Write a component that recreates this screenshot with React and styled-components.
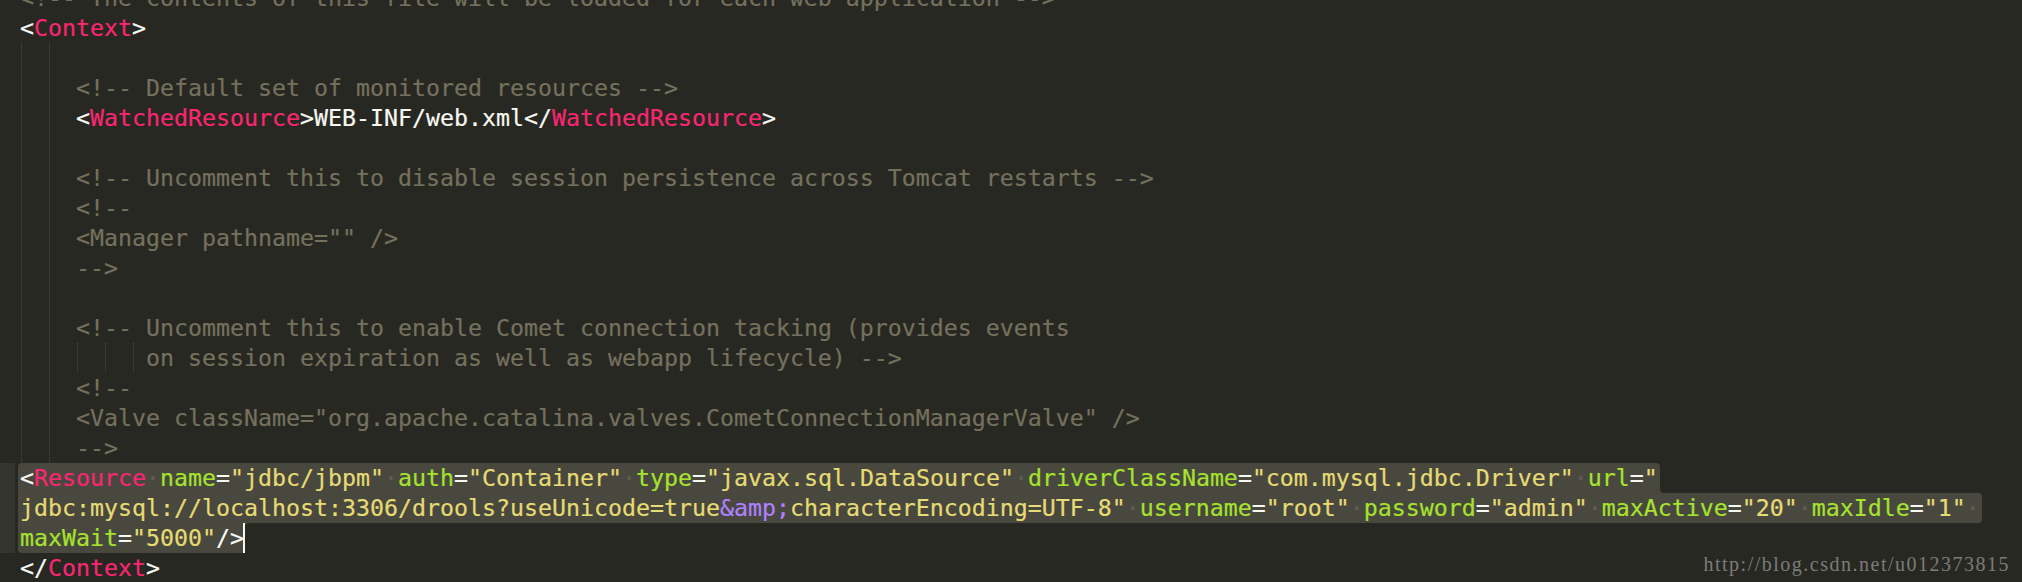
import React from "react";
import styled, { createGlobalStyle, css } from "styled-components";

const GlobalStyle = createGlobalStyle`
  html, body {
    margin: 0;
    padding: 0;
    background: #272822;
  }
  body {
    overflow: hidden;
  }
`;

const COLORS = {
  p: "#f8f8f2",
  t: "#f92672",
  a: "#a6e22e",
  s: "#e6db74",
  c: "#75715e",
  x: "#f8f8f2",
  e: "#ae81ff",
  w: "#5f5e54",
};

const SEL = "#49483e";
const R = 4;

// each line: guides (indent columns), tokens, selection shape
const LINES = [
  { tokens: [["c", "<!-- The contents of this file will be loaded for each web application -->"]] },
  { tokens: [["p", "<"], ["t", "Context"], ["p", ">"]] },
  { guides: [0, 2], tokens: [] },
  { guides: [0, 2], tokens: [["x", "    "], ["c", "<!-- Default set of monitored resources -->"]] },
  {
    guides: [0, 2],
    tokens: [
      ["x", "    "], ["p", "<"], ["t", "WatchedResource"], ["p", ">"], ["x", "WEB-INF/web.xml"],
      ["p", "</"], ["t", "WatchedResource"], ["p", ">"],
    ],
  },
  { guides: [0, 2], tokens: [] },
  {
    guides: [0, 2],
    tokens: [["x", "    "], ["c", "<!-- Uncomment this to disable session persistence across Tomcat restarts -->"]],
  },
  { guides: [0, 2], tokens: [["x", "    "], ["c", "<!--"]] },
  { guides: [0, 2], tokens: [["x", "    "], ["c", '<Manager pathname="" />']] },
  { guides: [0, 2], tokens: [["x", "    "], ["c", "-->"]] },
  { guides: [0, 2], tokens: [] },
  {
    guides: [0, 2],
    tokens: [["x", "    "], ["c", "<!-- Uncomment this to enable Comet connection tacking (provides events"]],
  },
  {
    guides: [0, 2, 4, 6, 8],
    tokens: [["x", "         "], ["c", "on session expiration as well as webapp lifecycle) -->"]],
  },
  { guides: [0, 2], tokens: [["x", "    "], ["c", "<!--"]] },
  {
    guides: [0, 2],
    tokens: [
      ["x", "    "],
      ["c", '<Valve className="org.apache.catalina.valves.CometConnectionManagerValve" />'],
    ],
  },
  { guides: [0, 2], tokens: [["x", "    "], ["c", "-->"]] },
  {
    sel: "first",
    tokens: [
      ["p", "<"], ["t", "Resource"], ["w"], ["a", "name"], ["p", "="], ["s", '"jdbc/jbpm"'], ["w"],
      ["a", "auth"], ["p", "="], ["s", '"Container"'], ["w"], ["a", "type"], ["p", "="],
      ["s", '"javax.sql.DataSource"'], ["w"], ["a", "driverClassName"], ["p", "="],
      ["s", '"com.mysql.jdbc.Driver"'], ["w"], ["a", "url"], ["p", "="], ["s", '"'],
    ],
  },
  {
    sel: "middle",
    tokens: [
      ["s", "jdbc:mysql://localhost:3306/drools?useUnicode=true"], ["e", "&amp;"],
      ["s", 'characterEncoding=UTF-8"'], ["w"], ["a", "username"], ["p", "="], ["s", '"root"'], ["w"],
      ["a", "password"], ["p", "="], ["s", '"admin"'], ["w"], ["a", "maxActive"], ["p", "="],
      ["s", '"20"'], ["w"], ["a", "maxIdle"], ["p", "="], ["s", '"1"'], ["w"],
    ],
  },
  {
    sel: "last",
    cursor: true,
    tokens: [["a", "maxWait"], ["p", "="], ["s", '"5000"'], ["p", "/>"]],
  },
  { tokens: [["p", "</"], ["t", "Context"], ["p", ">"]] },
];

const guideStyle = (cols) => css`
  background-image: ${cols
    .map(() => "linear-gradient(to bottom, #4c4c43 50%, transparent 50%)")
    .join(", ")};
  background-position: ${cols.map((c) => `${21 + c * 14}px 0`).join(", ")};
  background-size: 1px 2px;
  background-repeat: repeat-y;
`;

const Editor = styled.div`
  position: relative;
  width: 2022px;
  height: 582px;
  overflow: hidden;
  background: #272822;
  font-family: "DejaVu Sans Mono", "Liberation Mono", monospace;
  font-size: 23.25px;
  -webkit-text-stroke: 0.2px currentColor;
`;

const Code = styled.div`
  display: flex;
  flex-direction: column;
  margin-top: -17px;
`;

const Line = styled.div`
  height: 30px;
  line-height: 30px;
  padding-left: 20px;
  white-space: pre;
  ${({ $guides }) => $guides && guideStyle($guides)}
  ${({ $gutter }) =>
    $gutter &&
    css`
      background: linear-gradient(to right, #34352d 15px, transparent 15px);
    `}
`;

const selShapes = {
  first: css`
    border-radius: ${R}px ${R}px 0 0;
    &::after {
      content: "";
      position: absolute;
      right: -${R}px;
      bottom: 0;
      width: ${R}px;
      height: ${R}px;
      background: radial-gradient(circle at 100% 0, transparent ${R}px, ${SEL} ${R}px);
    }
  `,
  middle: css`
    border-radius: 0 ${R}px ${R}px 0;
  `,
  last: css`
    padding-right: 0;
    border-radius: 0 ${R}px ${R}px ${R}px;
    &::after {
      content: "";
      position: absolute;
      right: -${R}px;
      top: 0;
      width: ${R}px;
      height: ${R}px;
      background: radial-gradient(circle at 100% 100%, transparent ${R}px, ${SEL} ${R}px);
    }
  `,
};

const Selection = styled.span`
  position: relative;
  display: inline-block;
  height: 30px;
  margin-left: -2px;
  padding: 0 2px;
  background: ${SEL};
  ${({ $shape }) => selShapes[$shape]}
`;

const Tok = styled.span`
  color: ${({ $kind }) => COLORS[$kind]};
`;

const Cursor = styled.span`
  display: inline-block;
  width: 2px;
  height: 30px;
  margin-left: -1px;
  vertical-align: top;
  background: #f8f8f0;
`;

const Watermark = styled.div`
  position: absolute;
  right: 12px;
  bottom: 6px;
  font-family: "Liberation Serif", "DejaVu Serif", serif;
  font-size: 20px;
  letter-spacing: 1.5px;
  color: #7c7c79;
  -webkit-text-stroke: 0;
`;

const renderTokens = (tokens) =>
  tokens.map(([kind, text], i) =>
    kind === "w" ? (
      <Tok key={i} $kind="w">·</Tok>
    ) : (
      <Tok key={i} $kind={kind}>
        {text}
      </Tok>
    )
  );

export default function App() {
  return (
    <>
      <GlobalStyle />
      <Editor>
        <Code>
          {LINES.map((line, i) => (
            <Line key={i} $guides={line.guides} $gutter={!!line.sel}>
              {line.sel ? (
                <Selection $shape={line.sel}>
                  {renderTokens(line.tokens)}
                  {line.cursor && <Cursor />}
                </Selection>
              ) : (
                renderTokens(line.tokens)
              )}
            </Line>
          ))}
        </Code>
        <Watermark>http://blog.csdn.net/u012373815</Watermark>
      </Editor>
    </>
  );
}
